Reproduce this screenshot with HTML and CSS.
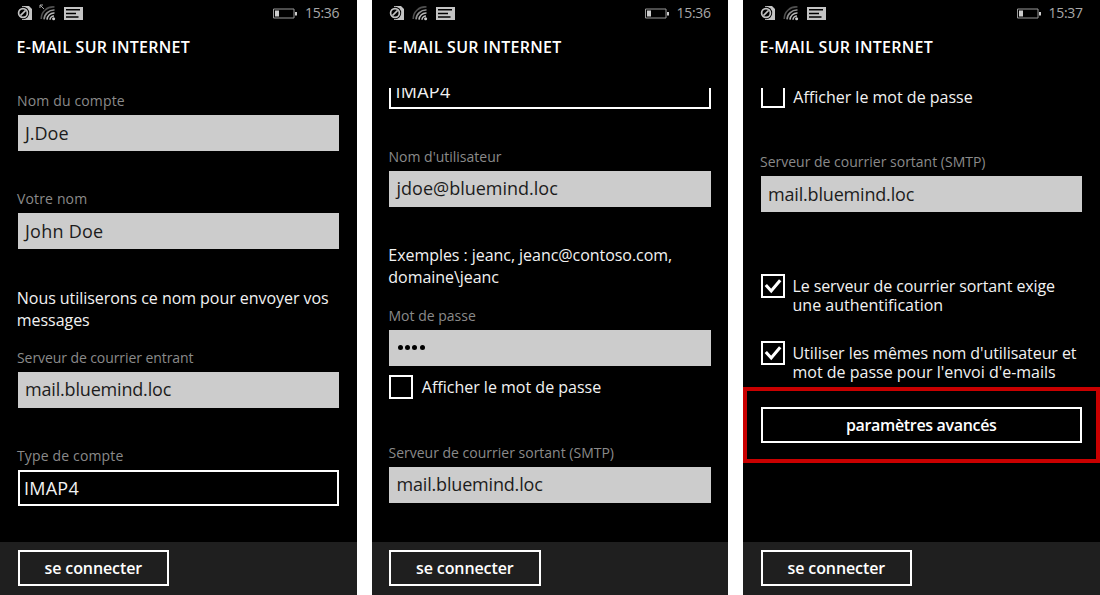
FILE: index.html
```html
<!DOCTYPE html>
<html lang="fr">
<head>
<meta charset="utf-8">
<title>E-mail sur Internet</title>
<link rel="stylesheet" href="styles.css">
</head>
<body>
<svg class="defs" width="0" height="0" aria-hidden="true">
  <symbol id="sim" viewBox="0 0 16 16">
    <path d="M5 1H12L15 4V15H5Z" fill="#c4c4c4"/>
    <circle cx="6" cy="8" r="6.2" fill="#000"/>
    <circle cx="6" cy="8" r="4.4" fill="none" stroke="#c4c4c4" stroke-width="1.7"/>
    <path d="M3.4 10.6L8.6 5.4" stroke="#c4c4c4" stroke-width="1.6"/>
  </symbol>
  <symbol id="wifi" viewBox="0 0 16 16">
    <g fill="none" stroke-width="1.6">
      <path d="M1.2 14A12 12 0 0 1 14.5 2" stroke="#505050"/>
      <path d="M4 14.4A10 10 0 0 1 14.5 5" stroke="#909090"/>
      <path d="M7 14.6A7 7 0 0 1 14.5 8" stroke="#b8b8b8"/>
      <path d="M10 14.8A4 4 0 0 1 14 11" stroke="#b8b8b8"/>
    </g>
    <circle cx="13.6" cy="13.7" r="1.5" fill="#ccc"/>
  </symbol>
  <symbol id="note" viewBox="0 0 19 13">
    <path d="M0 0H19V13H0Z" fill="#c4c4c4"/>
    <path d="M2 2.8H16M2 6.4H12M2 10H14.5" stroke="#000" stroke-width="1.5"/>
  </symbol>
  <symbol id="battery" viewBox="0 0 25 11">
    <path d="M.5 1H21V10H.5Z" fill="none" stroke="#999"/>
    <path d="M2 2.5H6V8.5H2Z" fill="#ccc"/>
    <path d="M22 4H24V7.5H22Z" fill="#ccc"/>
  </symbol>
  <symbol id="check" viewBox="0 0 20 20">
    <path d="M2.8 9L8.2 15L17.2 4.2" fill="none" stroke="#fff" stroke-width="3.1"/>
  </symbol>
</svg>
<main class="screens">
  <section class="phone">
    <header class="status">
      <svg class="sim"><use href="#sim"/></svg>
      <svg class="wifi"><use href="#wifi"/><path d="M0 0L4 4M0 3V0H3" stroke="#aaa" fill="none"/></svg>
      <svg class="note"><use href="#note"/></svg>
      <svg class="battery"><use href="#battery"/></svg>
      <time class="clock">15:36</time>
    </header>
    <h1 class="title">E-MAIL SUR INTERNET</h1>
    <div class="content account">
      <label class="label compte">Nom du compte</label>
      <div class="field"><span class="jd">J.Doe</span></div>
      <label class="label gap votre">Votre nom</label>
      <div class="field"><span class="john">John Doe</span></div>
      <p class="hint"><span class="nous">Nous utiliserons ce nom pour envoyer vos</span><br><span class="nous">messages</span></p>
      <label class="label entrant">Serveur de courrier entrant</label>
      <div class="field"><span class="mail">mail.bluemind.loc</span></div>
      <label class="label gap type">Type de compte</label>
      <div class="field select"><span class="imap">IMAP4</span></div>
    </div>
    <footer class="bar"><button class="button connect">se connecter</button></footer>
  </section>
  <section class="phone">
    <header class="status">
      <svg class="sim"><use href="#sim"/></svg>
      <svg class="wifi"><use href="#wifi"/></svg>
      <svg class="note"><use href="#note"/></svg>
      <svg class="battery"><use href="#battery"/></svg>
      <time class="clock">15:36</time>
    </header>
    <h1 class="title">E-MAIL SUR INTERNET</h1>
    <div class="content login">
      <div class="field select"><span class="imap">IMAP4</span></div>
      <label class="label gap user">Nom d'utilisateur</label>
      <div class="field"><span class="jdoe">jdoe@bluemind.loc</span></div>
      <p class="hint"><span class="nous">Exemples : jeanc, jeanc@contoso.com,</span><br><span class="nous">domaine\jeanc</span></p>
      <label class="label mot">Mot de passe</label>
      <div class="field password"><i></i><i></i><i></i><i></i></div>
      <div class="option"><span class="box"></span><span class="caption afficher">Afficher le mot de passe</span></div>
      <label class="label after-option sortant">Serveur de courrier sortant (SMTP)</label>
      <div class="field"><span class="mail">mail.bluemind.loc</span></div>
    </div>
    <footer class="bar"><button class="button connect">se connecter</button></footer>
  </section>
  <section class="phone">
    <header class="status">
      <svg class="sim"><use href="#sim"/></svg>
      <svg class="wifi"><use href="#wifi"/></svg>
      <svg class="note"><use href="#note"/></svg>
      <svg class="battery"><use href="#battery"/></svg>
      <time class="clock">15:37</time>
    </header>
    <h1 class="title">E-MAIL SUR INTERNET</h1>
    <div class="content outgoing">
      <div class="option"><span class="box"></span><span class="caption afficher">Afficher le mot de passe</span></div>
      <label class="label after-option sortant">Serveur de courrier sortant (SMTP)</label>
      <div class="field"><span class="mail">mail.bluemind.loc</span></div>
      <div class="option auth"><span class="box"><svg class="check"><use href="#check"/></svg></span><span class="caption"><span class="exige">Le serveur de courrier sortant exige</span><br>une authentification</span></div>
      <div class="option same"><span class="box"><svg class="check"><use href="#check"/></svg></span><span class="caption"><span class="memes">Utiliser les mêmes nom d'utilisateur et</span><br>mot de passe pour l'envoi d'e-mails</span></div>
      <div class="highlight"><button class="button advanced">paramètres avancés</button></div>
    </div>
    <footer class="bar"><button class="button connect">se connecter</button></footer>
  </section>
</main>
</body>
</html>
```

FILE: styles.css
```css
* { box-sizing: border-box; }
body { margin: 0; background: #fff; font-family: "Open Sans", "Noto Sans", sans-serif; }
.defs { display: none; }
.screens { display: grid; grid-template-columns: 356.5px 356.5px 357px; column-gap: 15px; height: 595px; overflow: hidden; }
.phone { display: flex; flex-direction: column; background: #000; color: #f2f2f2; overflow: hidden; }
.status { display: flex; align-items: center; height: 25px; padding: 0 17px; flex: none; }
.sim { width: 16px; height: 16px; margin-right: 7px; }
.wifi { width: 16px; height: 16px; margin-right: 8px; margin-top: 1px; overflow: visible; }
.note { width: 19px; height: 13px; margin-top: 1px; }
.battery { width: 25px; height: 11px; margin-left: auto; margin-right: 7px; margin-top: 1px; }
.clock { font-size: 14px; color: #a8a8a8; width: 34.5px; white-space: nowrap; letter-spacing: -.3px; }
.title { margin: 10px 0 0 16.5px; height: 24px; line-height: 24px; font-size: 16px; font-weight: 600; color: #fff; white-space: nowrap; letter-spacing: .28px; flex: none; }
.content { margin-top: 29px; height: 453.5px; padding: 0 17px 0 17.5px; overflow: hidden; flex: none; }
.account { padding-top: 3px; }
.label { display: block; height: 20px; line-height: 20px; margin-left: -.5px; margin-bottom: 4px; font-size: 14px; color: #8a8a8a; white-space: nowrap; }
.compte, .votre, .type { letter-spacing: .15px; }
.entrant { letter-spacing: -.08px; }
.gap { margin-top: 38px; }
.field { display: flex; align-items: center; height: 36px; width: 321.5px; padding: 0 0 1px 7.5px; background: #ccc; color: #1c1c1c; font-size: 18px; line-height: 34px; white-space: nowrap; }
.mail { letter-spacing: -.18px; }
.john, .imap { letter-spacing: .25px; }
.select { background: #000; color: #f2f2f2; border: 2px solid #fff; padding-left: 4.5px; padding-bottom: 0; }
.hint { margin: 37.5px 0 16px -.7px; font-size: 16px; line-height: 22.5px; white-space: nowrap; }
.nous { letter-spacing: -.05px; }
.login .field:first-child { margin-top: -15.5px; }
.login .hint { margin-top: 37px; margin-bottom: 17px; }
.password { gap: 2.4px; padding-left: 8.5px; padding-bottom: 0; }
.password i { width: 5px; height: 5px; border-radius: 50%; background: #000; }
.option { display: flex; margin-top: 9px; font-size: 16px; line-height: 19px; white-space: nowrap; }
.box { width: 24px; height: 24px; border: 2px solid #fff; margin-right: 8px; flex: none; }
.check { display: block; width: 20px; height: 20px; }
.caption { padding-top: 3px; }
.afficher { padding-top: 3.5px; padding-left: .8px; }
.exige { letter-spacing: -.1px; }
.memes { letter-spacing: -.07px; }
.after-option { margin-top: 44px; }
.outgoing .option:first-child { margin-top: -4px; }
.outgoing .auth { margin-top: 62px; height: 47px; }
.outgoing .same { margin-top: 20px; height: 46px; }
.highlight { width: 357px; height: 76px; margin-left: -17.5px; padding: 16px 13.5px; border: 4px solid #c90000; }
.button { display: block; height: 36px; padding: 0; border: 2px solid #fff; background: transparent; color: #fff; font: 600 16px/30px "Open Sans", "Noto Sans", sans-serif; white-space: nowrap; }
.connect { width: 151.5px; letter-spacing: -.1px; }
.advanced { width: 321.5px; letter-spacing: -.33px; }
.bar { margin-top: auto; height: 53.5px; flex: none; padding: 8px 17.5px; background: #1f1f1f; }
```
